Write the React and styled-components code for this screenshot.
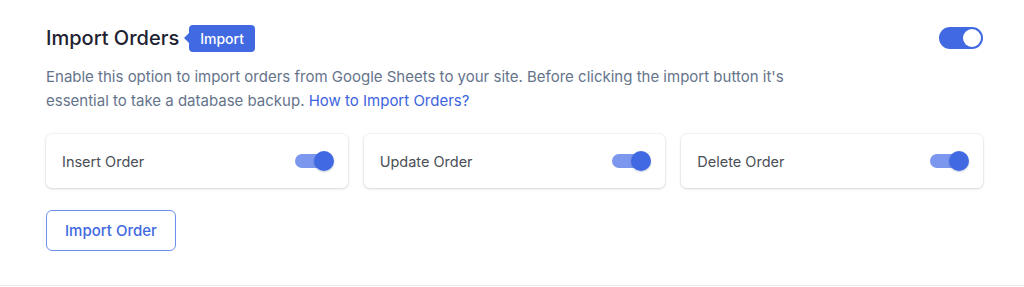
import React, { useState } from "react";
import styled, { createGlobalStyle } from "styled-components";

const GlobalStyle = createGlobalStyle`
  body {
    margin: 0;
    background: #ffffff;
    font-family: Inter, "Noto Sans", sans-serif;
    -webkit-font-smoothing: antialiased;
  }
`;

const Section = styled.section`
  padding: 24px 41px 34px 46px;
  border-bottom: 1px solid #e8e9ef;
`;

const Header = styled.div`
  display: flex;
  align-items: center;
  justify-content: space-between;
  height: 28px;
`;

const TitleGroup = styled.div`
  display: flex;
  align-items: center;
  gap: 10px;
`;

const Title = styled.h2`
  margin: 0;
  font-size: 20px;
  font-weight: 500;
  color: #1d2130;
  line-height: 28px;
`;

const Badge = styled.span`
  position: relative;
  display: inline-flex;
  align-items: center;
  height: 27px;
  padding: 0 11px;
  background: #4169e1;
  color: #ffffff;
  font-size: 14px;
  font-weight: 500;
  border-radius: 4px;

  &::before {
    content: "";
    position: absolute;
    left: -5px;
    top: 50%;
    transform: translateY(-50%);
    border-style: solid;
    border-width: 6px 6px 6px 0;
    border-color: transparent #4169e1 transparent transparent;
  }
`;

const Track = styled.button`
  position: relative;
  flex-shrink: 0;
  border: none;
  padding: 0;
  cursor: pointer;
  width: ${(p) => (p.$size === "sm" ? "38px" : "44px")};
  height: ${(p) => (p.$size === "sm" ? "14px" : "22px")};
  border-radius: 999px;
  background: ${(p) =>
    p.$size === "sm"
      ? p.$on ? "#7b97ee" : "#d4d8e2"
      : p.$on ? "#4169e1" : "#d4d8e2"};
`;

const Knob = styled.span`
  position: absolute;
  top: 50%;
  transform: translateY(-50%);
  border-radius: 50%;
  transition: left 0.15s;
  width: ${(p) => (p.$size === "sm" ? "20px" : "18px")};
  height: ${(p) => (p.$size === "sm" ? "20px" : "18px")};
  left: ${(p) =>
    p.$size === "sm"
      ? p.$on ? "19px" : "-1px"
      : p.$on ? "24px" : "2px"};
  background: ${(p) => (p.$size === "sm" ? "#4169e1" : "#ffffff")};
  box-shadow: ${(p) => (p.$size === "sm" ? "0 1px 2px rgba(30,50,120,0.25)" : "none")};
`;

const Toggle = ({ size, defaultOn = true }) => {
  const [on, setOn] = useState(defaultOn);
  return (
    <Track $size={size} $on={on} onClick={() => setOn(!on)} aria-pressed={on}>
      <Knob $size={size} $on={on} />
    </Track>
  );
};

const Description = styled.p`
  margin: 13px 0 0;
  font-size: 15px;
  line-height: 24px;
  color: #65748b;
  max-width: 760px;

  a {
    color: #3d63dd;
    text-decoration: none;
  }
`;

const Options = styled.div`
  display: grid;
  grid-template-columns: repeat(3, 1fr);
  gap: 16px;
  margin-top: 21px;
`;

const OptionCard = styled.div`
  display: flex;
  align-items: center;
  justify-content: space-between;
  height: 54px;
  padding: 0 15px 0 16px;
  background: #ffffff;
  border-radius: 6px;
  box-shadow: 0 1px 3px rgba(30, 40, 70, 0.16), 0 0 0 1px rgba(30, 40, 70, 0.04);
`;

const OptionLabel = styled.span`
  font-size: 14.5px;
  color: #4a4f57;
`;

const ImportButton = styled.button`
  margin-top: 22px;
  height: 41px;
  padding: 0 18px;
  background: #ffffff;
  border: 1.5px solid #6d8ff0;
  border-radius: 6px;
  color: #4169e1;
  font-family: inherit;
  font-size: 15px;
  font-weight: 500;
  cursor: pointer;
`;

const options = ["Insert Order", "Update Order", "Delete Order"];

export default function App() {
  return (
    <>
      <GlobalStyle />
      <Section>
        <Header>
          <TitleGroup>
            <Title>Import Orders</Title>
            <Badge>Import</Badge>
          </TitleGroup>
          <Toggle />
        </Header>
        <Description>
          Enable this option to import orders from Google Sheets to your site. Before clicking the import button it's
          essential to take a database backup. <a href="#">How to Import Orders?</a>
        </Description>
        <Options>
          {options.map((label) => (
            <OptionCard key={label}>
              <OptionLabel>{label}</OptionLabel>
              <Toggle size="sm" />
            </OptionCard>
          ))}
        </Options>
        <ImportButton>Import Order</ImportButton>
      </Section>
    </>
  );
}
